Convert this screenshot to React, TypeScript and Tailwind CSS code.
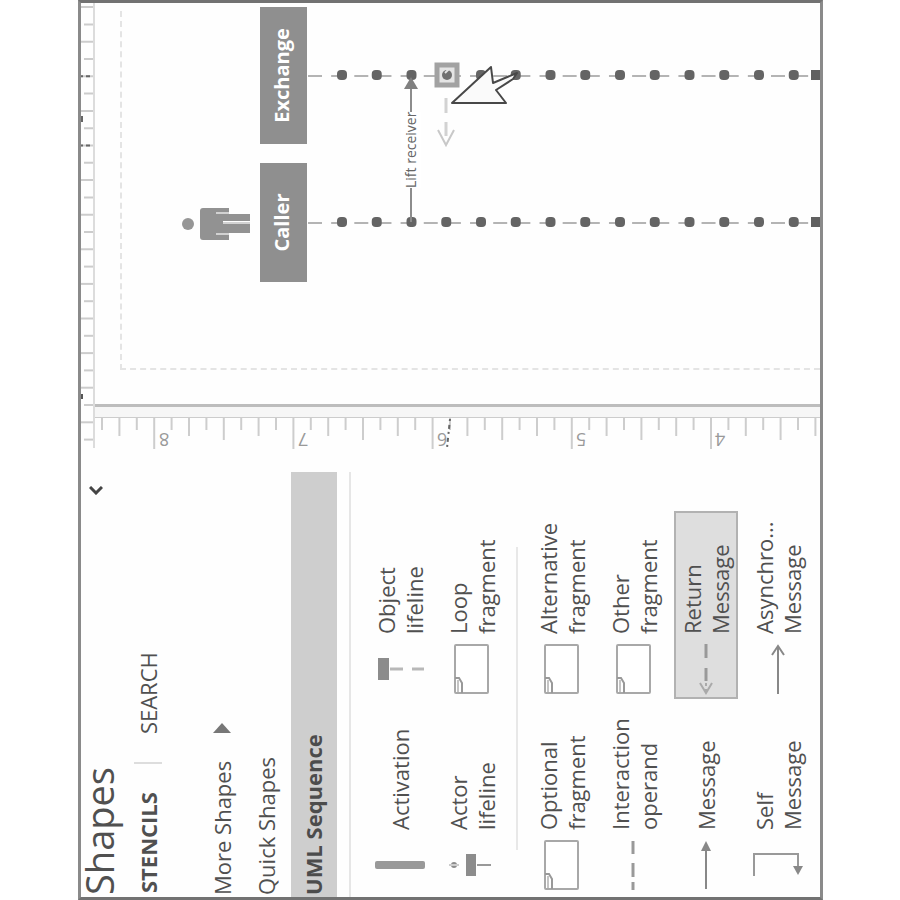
import type { ReactNode } from "react";

type Shape = { lines: string[]; icon: ReactNode; selected?: boolean };

function Icon({ children }: { children: ReactNode }) {
  return (
    <svg viewBox="0 0 50 50" className="size-[50px] shrink-0 overflow-visible" fill="none" aria-hidden="true">
      {children}
    </svg>
  );
}

const fragmentIcon = (
  <Icon>
    <rect x="1" y="8" width="48" height="33" rx="1" fill="#fff" stroke="#a8a8a8" strokeWidth="2" />
    <path d="M1 15H11L16 12V8" stroke="#999" strokeWidth="2" />
    <path d="M2 11H14" stroke="#c4c4c4" strokeWidth="2" />
  </Icon>
);

const lifelineShapes: Shape[] = [
  {
    lines: ["Activation"],
    icon: (
      <Icon>
        <rect x="21" y="0" width="8" height="50" rx="2" fill="#999" />
      </Icon>
    ),
  },
  {
    lines: ["Object", "lifeline"],
    icon: (
      <Icon>
        <rect x="14" y="3" width="22" height="11" fill="#8c8c8c" />
        <path d="M25 15V28M25 37V49" stroke="#b8b8b8" strokeWidth="3" />
      </Icon>
    ),
  },
  {
    lines: ["Actor", "lifeline"],
    icon: (
      <Icon>
        <circle cx="25" cy="7" r="3" fill="#8c8c8c" />
        <path d="M25 2V12" stroke="#ccc" strokeWidth="2" />
        <rect x="14" y="19" width="22" height="10" fill="#8c8c8c" />
        <path d="M25 30V44" stroke="#999" strokeWidth="2" />
      </Icon>
    ),
  },
  { lines: ["Loop", "fragment"], icon: fragmentIcon },
];

const messageShapes: Shape[] = [
  { lines: ["Optional", "fragment"], icon: fragmentIcon },
  { lines: ["Alternative", "fragment"], icon: fragmentIcon },
  {
    lines: ["Interaction", "operand"],
    icon: (
      <Icon>
        <path d="M0 24H8M13 24H27M36 24H49" stroke="#999" strokeWidth="3" />
      </Icon>
    ),
  },
  { lines: ["Other", "fragment"], icon: fragmentIcon },
  {
    lines: ["Message"],
    icon: (
      <Icon>
        <path d="M1 25H42" stroke="#888" strokeWidth="2" />
        <path d="M49 25L39 20V30Z" fill="#888" />
      </Icon>
    ),
  },
  {
    lines: ["Return", "Message"],
    selected: true,
    icon: (
      <Icon>
        <path d="M13 25H26M36 25H50" stroke="#999" strokeWidth="3" />
        <path d="M11 19L1 25L11 31" stroke="#aaa" strokeWidth="2" />
        <path d="M2 25H11" stroke="#aaa" strokeWidth="2" strokeDasharray="3 3" />
      </Icon>
    ),
  },
  {
    lines: ["Self", "Message"],
    icon: (
      <Icon>
        <path d="M14 1H36V45H22" stroke="#999" strokeWidth="2" />
        <path d="M15 45L24 40V50Z" fill="#888" />
      </Icon>
    ),
  },
  {
    lines: ["Asynchro...", "Message"],
    icon: (
      <Icon>
        <path d="M0 25H48M39 19L48 25L39 31" stroke="#888" strokeWidth="2" />
      </Icon>
    ),
  },
];

function ShapeGrid({ shapes }: { shapes: Shape[] }) {
  return (
    <div className="grid grid-cols-[188px_188px] gap-x-2 gap-y-2 pl-0.5">
      {shapes.map((s) => (
        <button
          key={s.lines.join(" ")}
          type="button"
          className={
            "flex h-16 items-center gap-2.5 border-2 pl-[3px] text-left text-[22px] leading-7 text-[#505050] " +
            (s.selected ? "border-[#b2b2b2] bg-[#dedede]" : "border-transparent")
          }
        >
          {s.icon}
          <span>
            {s.lines.map((line) => (
              <span key={line} className="block whitespace-nowrap">
                {line}
              </span>
            ))}
          </span>
        </button>
      ))}
    </div>
  );
}

function ShapesPanel() {
  return (
    <aside className="w-[449px] shrink-0 text-[22px] text-[#505050]">
      <header className="flex items-start justify-between pr-[38px] pl-0.5">
        <h1 className="text-[38px] leading-9">Shapes</h1>
        <button type="button" aria-label="Collapse" className="mt-2">
          <svg viewBox="0 0 9 14" className="h-3.5 w-[9px]" fill="none" stroke="#444" strokeWidth="3">
            <path d="M8 1L2 7L8 13" />
          </svg>
        </button>
      </header>

      <div className="mt-[17px] flex h-7 items-center pl-1 leading-7">
        <button type="button" className="font-bold">
          STENCILS
        </button>
        <span className="ml-7 h-7 w-0.5 bg-[#ddd]" />
        <button type="button" className="ml-7">
          SEARCH
        </button>
      </div>

      <nav className="mt-[38px]">
        <button type="button" className="flex h-11 items-center pl-0.5">
          More Shapes
          <svg viewBox="0 0 10 18" className="ml-7 h-[18px] w-2.5">
            <path d="M0 0L10 9L0 18Z" fill="#777" />
          </svg>
        </button>
        <button type="button" className="flex h-11 items-center pl-0.5">
          Quick Shapes
        </button>
        <button
          type="button"
          className="mt-[3px] flex h-[46px] w-[425px] items-center bg-[#cecece] pb-0.5 pl-0.5 font-bold text-[#4c4c4c]"
        >
          UML Sequence
        </button>
      </nav>

      <hr className="mt-3 w-[425px] border-t-2 border-[#e6e6e6]" />
      <div className="mt-[17px]">
        <ShapeGrid shapes={lifelineShapes} />
      </div>
      <hr className="mt-3 ml-[47px] w-[303px] border-t-2 border-[#e8e8e8]" />
      <div className="mt-3">
        <ShapeGrid shapes={messageShapes} />
      </div>
    </aside>
  );
}

function TopRuler() {
  const ticks = Array.from({ length: 26 }, (_, i) => i - 2);
  return (
    <div className="h-3.5 overflow-hidden border-b-2 border-[#dcdcdc]">
      <svg className="h-3.5 w-full" aria-hidden="true">
        {ticks.map((k) => {
          const x = 43 + 17.3 * k;
          const dark = k === 19 || k === 15;
          return (
            <g key={k}>
              <line x1={x} x2={x} y1={k % 2 ? 0 : 3} y2="13" stroke="#ccc" strokeWidth="2" />
              {dark && <line x1={x} x2={x} y1="0" y2="9" stroke="#666" strokeWidth="2" strokeDasharray="2 3 4 9" />}
            </g>
          );
        })}
        <rect x="49" y="0" width="5" height="2" fill="#555" />
        <rect x="326" y="0" width="6" height="2" fill="#666" />
      </svg>
    </div>
  );
}

function SideRuler() {
  const ticks = Array.from({ length: 42 }, (_, i) => i);
  const length = (i: number) => {
    const n = (i + 5) % 8;
    return n === 0 ? 31 : n === 4 ? 22 : n % 2 === 0 ? 18 : 12;
  };
  return (
    <svg className="h-full w-[30px] shrink-0 overflow-visible" aria-label="Ruler">
      {ticks.map((i) => {
        const y = 7 + 17.4 * i;
        return <line key={i} x1="30" x2={30 - length(i)} y1={y} y2={y} stroke="#cdcdcd" strokeWidth="2" />;
      })}
      {["8", "7", "6", "5", "4"].map((label, i) => {
        const y = 69 + 139 * i;
        return (
          <text
            key={label}
            x="15"
            y={y}
            transform={`rotate(-90 15 ${y})`}
            textAnchor="middle"
            fontSize="18"
            fill="#999"
          >
            {label}
          </text>
        );
      })}
      <path d="M29 355L0 352" stroke="#666" strokeWidth="2" strokeDasharray="2 4 4 3" />
    </svg>
  );
}

function Lifeline({ x }: { x: number }) {
  const points = Array.from({ length: 14 }, (_, i) => 222 + 34.75 * i);
  return (
    <g>
      <line x1={x} x2={x} y1="188" y2="700" stroke="#b4b4b4" strokeWidth="2" strokeDasharray="14 9.15" />
      {points.map((y) => (
        <rect key={y} x={x - 4} y={y - 5} width="10" height="10" rx="4" fill="#646464" />
      ))}
      <rect x={x - 4} y="691" width="10" height="10" fill="#606060" />
    </g>
  );
}

function Diagram() {
  return (
    <div className="relative mt-[25px] ml-[34px] mr-2 flex-1 border-t-2 border-l-2 border-dashed border-[#e4e4e4]">
      <svg className="absolute -top-0.5 -left-0.5 size-full overflow-visible" fill="none" aria-hidden="true">
        <circle cx="146" cy="68" r="6" fill="#969696" />
        <path
          d="M133 80H159Q162 80 162 83V109H158V96H156V130H149V103H146V130H137V96H135V109H130V83Q130 80 133 80Z"
          fill="#929292"
        />
        <path d="M147 103V130M136 96V109M157 96V109" stroke="#d2d2d2" strokeWidth="2" />
        <Lifeline x={147} />
        <Lifeline x={294} />
        <line x1="148" x2="284" y1="291" y2="291" stroke="#8c8c8c" strokeWidth="2" />
        <path d="M293 291L281 284V298Z" fill="#808080" />
        <rect x="285" y="317" width="20" height="20" fill="#e4e4e4" stroke="#a2a2a2" strokeWidth="5" />
        <circle cx="295" cy="327" r="5" fill="#707070" />
        <path d="M297 325L301 329" stroke="#e4e4e4" strokeWidth="2" />
        <path d="M272 326H257M248 326H234" stroke="#d2d2d2" strokeWidth="3" />
        <path d="M240 318L225 326L240 334" stroke="#c8c8c8" strokeWidth="2" />
        <path
          d="M267 332L303 371L287 373L297 397L291 393L280 376L267 386Z"
          fill="#fafafa"
          stroke="#484848"
          strokeWidth="2"
          strokeLinejoin="round"
        />
      </svg>
      <div className="absolute top-[138px] left-[86px] flex h-[47px] w-[119px] items-center justify-center bg-[#8f8f8f] pb-1 text-xl font-bold text-white">
        Caller
      </div>
      <div className="absolute top-[138px] left-56 flex h-[47px] w-[137px] items-center justify-center bg-[#8f8f8f] pb-1 text-xl font-bold text-white">
        Exchange
      </div>
      <div className="absolute top-[279px] left-[180px] bg-white text-sm leading-5 text-[#666]">Lift receiver</div>
    </div>
  );
}

export default function App() {
  return (
    <div className="h-screen w-full overflow-hidden bg-white">
      <div className="flex h-[100vw] w-[100vh] origin-top-left translate-y-[100vh] -rotate-90 flex-col pt-[78px] pb-[77px] font-['Open_Sans','Noto_Sans',sans-serif]">
        <main className="flex min-h-0 flex-1 border-[3px] border-x-[#727272] border-y-[#8a8a8a] bg-[#fefefe]">
          <ShapesPanel />
          <section className="flex min-w-0 flex-1 flex-col">
            <TopRuler />
            <div className="flex min-h-0 flex-1">
              <SideRuler />
              <div className="w-[11px] shrink-0 border-l border-[#ccc] bg-[#f6f6f6]" />
              <div className="w-[3px] shrink-0 bg-[#bdbdbd]" />
              <div className="flex min-w-0 flex-1 flex-col overflow-hidden">
                <Diagram />
              </div>
            </div>
          </section>
        </main>
      </div>
    </div>
  );
}
